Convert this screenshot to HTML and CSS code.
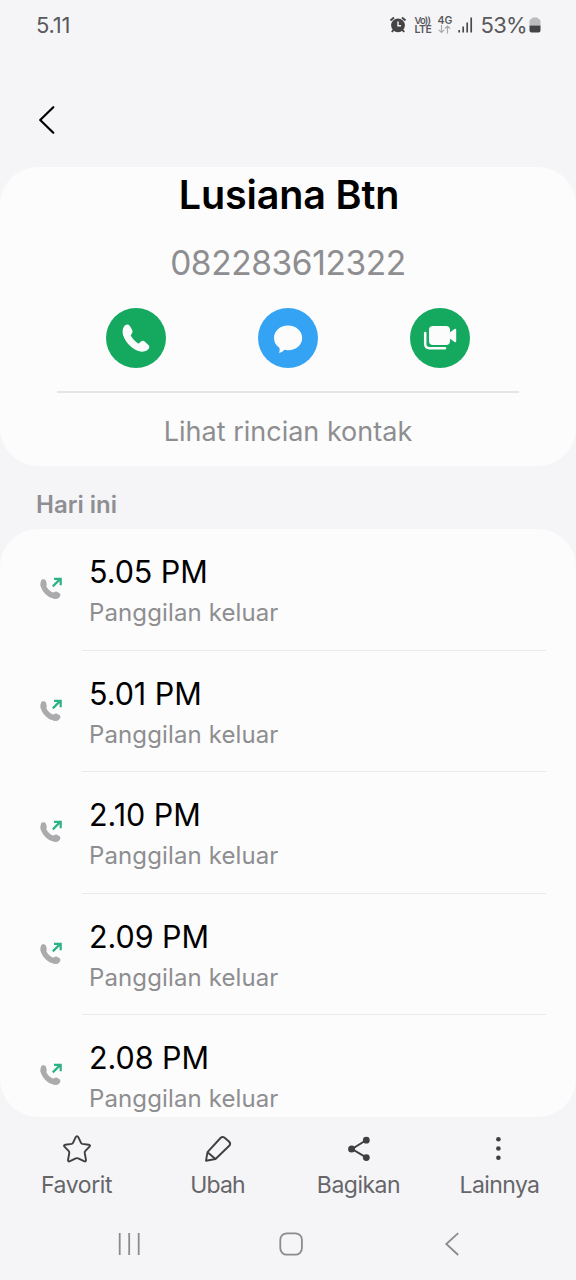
FILE: index.html
```html
<!DOCTYPE html>
<html lang="id">
<head>
<meta charset="utf-8">
<title>Lusiana Btn</title>
<link rel="stylesheet" href="styles.css">
</head>
<body>
<svg class="defs" width="0" height="0" aria-hidden="true">
  <symbol id="outgoing" viewBox="0 0 24 24">
    <path fill="none" stroke="#ababad" stroke-width="5.400" stroke-linecap="round" d="M4.200 6C3.800 12 10.500 19.600 17.500 19"/>
    <path fill="#ababad" d="M2 3.500C3.500 1.500 6.500 2 7 4L7.700 6.500C8 8.300 6.800 9.500 5.500 10.500L1.500 9ZM14 17C15 15 16.200 14.200 18 14.800L20.300 16C22.300 17.300 21.500 20 19 21.300L14.500 22Z"/>
    <path fill="none" stroke="#2db284" stroke-width="2.200" d="M13.800 9.400L21.300 1.900M15 1.900H21.700V8.300"/>
  </symbol>
</svg>
<div class="phone">
  <header class="status">
    <span class="clock">5.11</span>
    <div class="status-icons">
      <svg class="alarm" width="18" height="18" viewBox="0 0 18 18"><circle cx="9" cy="9.300" r="6.900" fill="#444446"/><path d="M1.500 4.500L5 1.500M16.500 4.500L13 1.500M4.500 14L2.800 16M13.500 14L15.200 16" stroke="#444446" stroke-width="1.900"/><path d="M9 5.500V9.700H12" fill="none" stroke="#f5f5f8" stroke-width="1.400"/></svg>
      <div class="volte"><span class="vo">Vo))</span><span>LTE</span></div>
      <div class="network"><span>4G</span><svg width="13" height="9" viewBox="0 0 13 9"><path d="M3.500 0V7.500M.8 4.800L3.500 7.500L6.200 4.800M9.500 8.500V1M6.800 3.700L9.500 1L12.200 3.700" fill="none" stroke="#a8a8aa" stroke-width="1.200"/></svg></div>
      <svg class="signal" width="15" height="16" viewBox="0 0 15 16"><path d="M1.200 13V15.500M5.200 9.500V15.500M9.200 5.500V15.500M13.200 .5V15.500" stroke="#4a4a4c" stroke-width="1.700"/></svg>
      <span class="percent">53%</span>
      <svg class="battery" width="12" height="16" viewBox="0 0 12 16"><path d="M2.500 2Q2.500.5 4 .5H8Q9.500.5 9.500 2Q11.500 2 11.500 4V8.500H.5V4Q.5 2 2.500 2Z" fill="#bcbcbe"/><path d="M.5 8.500H11.500V13.500Q11.500 15.500 9.500 15.500H2.500Q.5 15.500.5 13.500Z" fill="#444446"/></svg>
    </div>
  </header>

  <nav class="topbar">
    <svg width="18" height="30" viewBox="0 0 18 30"><path d="M15.300 2.200L2.200 15L15.300 27.700" fill="none" stroke="#000" stroke-width="2.200" stroke-linecap="round" stroke-linejoin="round"/></svg>
  </nav>

  <section class="contact">
    <h1 class="name">Lusiana Btn</h1>
    <div class="number">082283612322</div>
    <div class="actions">
      <svg width="60" height="60" viewBox="0 0 60 60"><circle cx="30" cy="30" r="30" fill="#14a95e"/><path fill="#fcfcfd" d="M18 18.600C19.800 16 22.600 15.800 24 18.300L26.300 22.300C27.200 24.200 25.500 26 24.700 27.400C26.300 30.500 29.300 33.600 32.500 35.700C34 34.700 36 32.300 38 33L42.200 36.700C44.300 38.600 43.200 40.800 41 42.200C37.500 44.500 33 44 28.500 41.200C23.500 38 19 33 17.200 27.500C16.200 24.400 16.400 21 18 18.600Z"/></svg>
      <svg width="60" height="60" viewBox="0 0 60 60"><circle cx="30" cy="30" r="30" fill="#34a3f4"/><path fill="#fcfcfd" d="M30 17.500C38 17.500 44.200 23 44.200 30C44.200 37 38 42.300 30.300 42.300C28.500 42.300 27.500 42.100 26.300 41.800C25 43.500 23 45 20.800 44.800C22 43.100 21.800 41.500 21.300 39.800C17.800 37.500 16 34 16 30C16 23 22 17.500 30 17.500Z"/></svg>
      <svg width="60" height="60" viewBox="0 0 60 60"><circle cx="30" cy="30" r="30" fill="#14a95e"/><rect x="19" y="18" width="21" height="19" rx="4" fill="#fcfcfd"/><path fill="#fcfcfd" d="M38.500 25.500L44.500 21Q46.200 20 46.200 21.800V33.200Q46.200 35 44.500 34L38.500 29.500Z"/><path d="M15.200 25V36Q15.200 40.200 19.400 40.200H35" fill="none" stroke="#fcfcfd" stroke-width="2.500" stroke-linecap="round"/></svg>
    </div>
    <div class="details">Lihat rincian kontak</div>
  </section>

  <h2 class="day">Hari ini</h2>

  <section class="calls">
    <article class="call"><svg class="call-icon"><use href="#outgoing"/></svg><div class="call-body"><div class="time">5.05 PM</div><div class="type">Panggilan keluar</div></div></article>
    <article class="call"><svg class="call-icon"><use href="#outgoing"/></svg><div class="call-body"><div class="time">5.01 PM</div><div class="type">Panggilan keluar</div></div></article>
    <article class="call"><svg class="call-icon"><use href="#outgoing"/></svg><div class="call-body"><div class="time">2.10 PM</div><div class="type">Panggilan keluar</div></div></article>
    <article class="call"><svg class="call-icon"><use href="#outgoing"/></svg><div class="call-body"><div class="time">2.09 PM</div><div class="type">Panggilan keluar</div></div></article>
    <article class="call"><svg class="call-icon"><use href="#outgoing"/></svg><div class="call-body"><div class="time">2.08 PM</div><div class="type">Panggilan keluar</div></div></article>
  </section>

  <footer class="toolbar">
    <div class="tool"><svg width="30" height="30" viewBox="0 0 30 30"><path d="M15 2.200Q15.800 2.200 16.300 3.200L19 8.800Q19.400 9.700 20.400 9.900L26.600 10.700Q29 11.100 27.300 12.900L23.200 17.200Q22.500 17.900 22.700 18.900L23.900 25.500Q24.300 28.300 22 27.200L16.200 24.400Q15 23.900 13.800 24.400L8 27.200Q5.700 28.300 6.100 25.500L7.300 18.900Q7.500 17.900 6.800 17.200L2.700 12.900Q1 11.100 3.400 10.700L9.600 9.900Q10.600 9.700 11 8.800L13.700 3.200Q14.200 2.200 15 2.200Z" fill="none" stroke="#3f3f42" stroke-width="1.900"/></svg><span class="favorite">Favorit</span></div>
    <div class="tool"><svg width="30" height="30" viewBox="0 0 30 30"><path d="M3 26.700L4.500 18.200L17.500 4Q19.300 2.200 21.300 3.500L26 7.500Q28 9.500 26.500 11.500L12.500 25ZM4.500 18.200L12.500 25" fill="none" stroke="#3f3f42" stroke-width="1.900" stroke-linejoin="round"/></svg><span class="edit">Ubah</span></div>
    <div class="tool"><svg width="30" height="30" viewBox="0 0 30 30"><path d="M22.500 6L8 15L22.500 23.700" fill="none" stroke="#3f3f42" stroke-width="2"/><g fill="#3f3f42"><circle cx="22.300" cy="6.200" r="3.400"/><circle cx="7.600" cy="15" r="3.500"/><circle cx="22.300" cy="23.600" r="3.400"/></g></svg><span class="share">Bagikan</span></div>
    <div class="tool"><svg width="30" height="30" viewBox="0 0 30 30"><g fill="#3f3f42"><circle cx="13.400" cy="5.200" r="2.300"/><circle cx="13.400" cy="14.500" r="2.300"/><circle cx="13.400" cy="23.800" r="2.300"/></g></svg><span class="more">Lainnya</span></div>
  </footer>

  <nav class="system">
    <svg width="26" height="26" viewBox="0 0 26 26"><path d="M3.700 2V24M13.200 2V24M22.700 2V24" stroke="#8b8b8d" stroke-width="1.800"/></svg>
    <svg width="26" height="26" viewBox="0 0 26 26"><rect x="2.300" y="2.300" width="21.600" height="21.400" rx="6.500" fill="none" stroke="#8b8b8d" stroke-width="1.800"/></svg>
    <svg width="26" height="26" viewBox="0 0 26 26"><path d="M19.200 2.200L7.300 13L19.200 24" fill="none" stroke="#8b8b8d" stroke-width="1.800"/></svg>
  </nav>
</div>
</body>
</html>
```
FILE: styles.css
```css
* { box-sizing: border-box; }
body {
  margin: 0;
  background: #f5f5f8;
  font-family: Inter, Roboto, "Liberation Sans", sans-serif;
  color: #000;
}
svg { display: block; flex: none; }
.defs { position: absolute; }
.phone {
  width: 576px;
  height: 1280px;
  display: flex;
  flex-direction: column;
  overflow: hidden;
}
.phone > * { flex: none; }
.status {
  height: 51px;
  padding: 0 35px 1px 36px;
  display: flex;
  justify-content: space-between;
  align-items: center;
  color: #59595b;
  font-size: 22px;
  line-height: 49px;
}
.clock { letter-spacing: -.2px; }
.status-icons { display: flex; align-items: center; }
.volte, .network {
  display: flex;
  flex-direction: column;
  font-weight: 600;
  font-size: 10.500px;
  line-height: 9.500px;
}
.volte { width: 17px; margin-left: 8px; letter-spacing: -.5px; }
.vo { font-size: 9.500px; letter-spacing: -.9px; }
.network { width: 14px; margin-left: 6px; }
.signal { margin-left: 6px; }
.percent { margin-left: 8px; letter-spacing: -.7px; }
.battery { margin-left: 2px; }
.topbar { height: 116px; padding: 54px 0 0 38px; }
.contact {
  height: 299px;
  border-radius: 38px;
  background: #fcfcfd;
  text-align: center;
}
.name {
  margin: 0;
  height: 55px;
  padding-left: 2px;
  font-size: 39.500px;
  font-weight: 600;
  line-height: 56px;
  letter-spacing: -.15px;
}
.number {
  height: 80px;
  font-size: 33.500px;
  line-height: 82px;
  letter-spacing: -.4px;
  color: #8e8e90;
}
.actions {
  height: 91px;
  margin: 0 57px;
  padding: 6px 49px 0;
  display: flex;
  justify-content: space-between;
  border-bottom: 2px solid #e5e5e7;
}
.details {
  font-size: 27px;
  line-height: 78px;
  color: #8e8e90;
}
.day {
  margin: 0;
  height: 63px;
  padding: 8px 36px;
  font-size: 24px;
  font-weight: 600;
  line-height: 62px;
  color: #8e8e93;
}
.calls {
  height: 588px;
  border-radius: 38px;
  background: #fcfcfd;
  overflow: hidden;
}
.call {
  height: 121.500px;
  padding-left: 39px;
  display: flex;
}
.call-icon { width: 24px; height: 24px; margin-top: 48px; }
.call-body {
  width: 464px;
  margin-left: 19px;
  padding: 23px 0 0 7px;
  border-bottom: 1px solid #e9e9eb;
}
.time { font-size: 30.500px; line-height: 40px; letter-spacing: -.05px; }
.type { font-size: 24px; line-height: 41px; letter-spacing: .12px; color: #8e8e90; }
.toolbar {
  height: 91px;
  padding: 17px 6px 0;
  display: grid;
  grid-template-columns: repeat(4, 141px);
}
.tool {
  display: flex;
  flex-direction: column;
  align-items: center;
  font-size: 23px;
  line-height: 43px;
  letter-spacing: -.4px;
  color: #666668;
}
.edit { letter-spacing: -.9px; }
.share { letter-spacing: -.5px; }
.more { letter-spacing: -.6px; }
.system {
  padding: 23px 111px 0 116px;
  display: flex;
  justify-content: space-between;
}
```
